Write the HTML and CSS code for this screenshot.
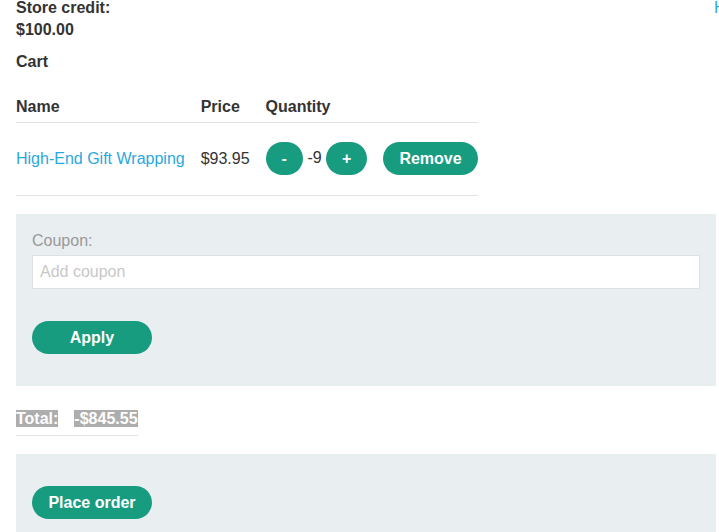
FILE: index.html
```html
<!DOCTYPE html>
<html lang="en">
<head>
<meta charset="utf-8">
<title>Cart</title>
<link rel="stylesheet" href="styles.css">
</head>
<body>
<div class="page">
  <header class="top">
    <div class="credit">
      <div>Store credit:</div>
      <div>$100.00</div>
    </div>
    <a class="home" href="#">Home</a>
  </header>
  <h2 class="cart-title">Cart</h2>
  <table class="cart">
    <thead>
      <tr><th>Name</th><th>Price</th><th colspan="2">Quantity</th></tr>
    </thead>
    <tbody>
      <tr>
        <td><a class="item" href="#">High-End Gift Wrapping</a></td>
        <td>$93.95</td>
        <td class="qty"><button class="btn">-</button> -9 <button class="btn">+</button></td>
        <td><button class="btn">Remove</button></td>
      </tr>
    </tbody>
  </table>
  <form class="panel coupon">
    <label class="coupon-label" for="coupon">Coupon:</label>
    <input class="coupon-input" id="coupon" type="text" placeholder="Add coupon">
    <button class="btn wide" type="button">Apply</button>
  </form>
  <table class="total">
    <tr><th><span class="hl">Total:</span></th><th><span class="hl">-$845.55</span></th></tr>
  </table>
  <div class="panel order">
    <button class="btn wide" type="button">Place order</button>
  </div>
</div>
</body>
</html>
```
FILE: styles.css
```css
html { overflow: hidden; }
body {
  margin: 0;
  font-family: "Liberation Sans", Arial, sans-serif;
  font-size: 16px;
  color: #333;
}
.page {
  width: 700px;
  margin: -3px 0 0 16px;
}
.top {
  display: flex;
  justify-content: space-between;
  align-items: flex-start;
  font-weight: bold;
  line-height: 22px;
}
.home {
  flex: 0 0 0;
  min-width: 0;
  width: 0;
  margin-right: 2px;
  white-space: nowrap;
  color: #2aa8e0;
  text-decoration: none;
  font-weight: normal;
  line-height: 22px;
}
.cart-title {
  margin: 10px 0 0;
  font-size: 16px;
  line-height: 22px;
}
.cart {
  border-collapse: collapse;
  margin-top: 25px;
}
.cart th {
  text-align: left;
  line-height: 18px;
  padding: 0 16px 6px 0;
  border-bottom: 1px solid #e3e3e3;
  white-space: nowrap;
}
.cart td {
  padding: 19px 16px 20px 0;
  line-height: 18px;
  border-bottom: 1px solid #e3e3e3;
  white-space: nowrap;
  vertical-align: middle;
}
.cart td:last-child, .cart th:last-child { padding-right: 0; }
.item { color: #2aa8e0; text-decoration: none; }
.btn {
  font-family: inherit;
  font-size: 16px;
  font-weight: bold;
  color: #fff;
  background: #179c7f;
  border: 0;
  border-radius: 17px;
  height: 33px;
  padding: 0 16px;
  vertical-align: middle;
  cursor: pointer;
}
.wide { width: 120px; padding: 0; }
.panel {
  background: #e9eef1;
}
.coupon {
  margin-top: 18px;
  padding: 16px 16px 32px;
}
.coupon-label {
  display: block;
  color: #999;
  line-height: 22px;
  margin-bottom: 3px;
}
.coupon-input {
  display: block;
  box-sizing: border-box;
  width: 100%;
  height: 34px;
  margin: 0 0 32px;
  padding: 0 7px;
  border: 1px solid #dde1e3;
  background: #fff;
  font-family: inherit;
  font-size: 16px;
  color: #333;
  outline: none;
}
.coupon-input::placeholder { color: #c8c8c8; }
.total {
  border-collapse: collapse;
  margin-top: 16px;
}
.total th {
  text-align: left;
  padding: 8px 16px 7px 0;
  border-bottom: 1px solid #e3e3e3;
  line-height: 18px;
}
.total th:last-child { padding-right: 0; }
.hl {
  background: #adadad;
  color: #fff;
}
.order {
  margin-top: 18px;
  padding: 32px 16px 40px;
}
```
